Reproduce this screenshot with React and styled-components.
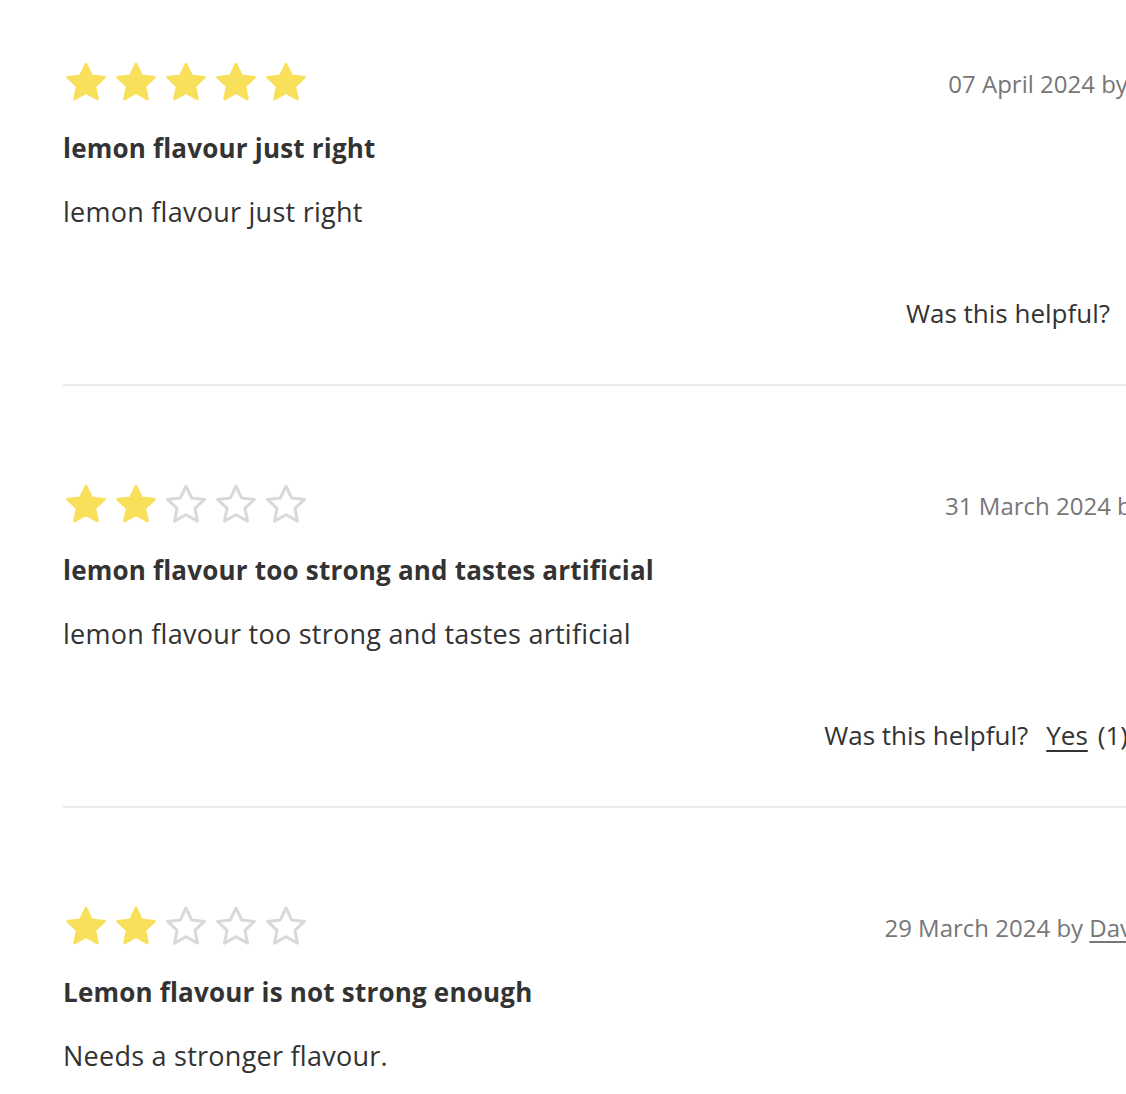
import React from 'react';
import styled, { createGlobalStyle } from 'styled-components'

const GlobalStyle = createGlobalStyle`
    html, body {
        margin: 0;
        padding: 0;
        background: #fff;
        overflow: hidden;
    }
    body {
        font-family: "Open Sans", Lato, sans-serif;
        color: #333;
    }
`

const Page = styled.div`
    padding: 60px 0 0 63px;
    width: 1065px;
`

const Review = styled.article`
    border-bottom: 2px solid #ebebeb;
    margin-bottom: 96px;
    padding-bottom: 53px;
`

const Header = styled.div`
    display: flex;
    align-items: center;
    justify-content: space-between;
    margin-right: -80px;
    height: 46px;
`

const Stars = styled.div`
    display: flex;
    gap: 2px;
    margin-left: -1px;
`

const DateLine = styled.div`
    font-size: 24px;
    color: #777;
    white-space: nowrap;
`

const Author = styled.a`
    color: #777;
    text-decoration: underline;
    text-underline-offset: 4px;
`

const Title = styled.h3`
    margin: 24px 0 0;
    font-size: 26px;
    letter-spacing: 0.2px;
    line-height: 36px;
    font-weight: 700;
    color: #333;
`

const Body = styled.p`
    margin: 28px 0 0;
    font-size: 27px;
    letter-spacing: 0.25px;
    line-height: 36px;
    color: #333;
`

const Helpful = styled.div`
    margin-top: 65px;
    display: flex;
    justify-content: flex-end;
    align-items: baseline;
    font-size: 26px;
    line-height: 36px;
    color: #333;
    white-space: nowrap;
`

const HelpLabel = styled.span`
    margin-right: 18px;
`

const Vote = styled.a`
    color: #333;
    text-decoration: underline;
    text-underline-offset: 5px;
    margin-right: 10px;
`

const Star = ({ filled }) => (
    <svg width="48" height="48" viewBox="0 0 24 24">
        <path
            d="M12 2.5l2.8 5.95 6.45.75-4.8 4.45 1.3 6.4L12 16.85 6.25 20.05l1.3-6.4L2.75 9.2l6.45-.75z"
            fill={filled ? '#f9e05b' : 'none'}
            stroke={filled ? '#f9e05b' : '#d9d9d9'}
            strokeWidth={filled ? 1.3 : 1.5}
            strokeLinejoin="round"
        />
    </svg>
)

const reviews = [
    { rating: 5, date: '07 April 2024', author: 'Rachel', title: 'lemon flavour just right', body: 'lemon flavour just right', votes: null },
    { rating: 2, date: '31 March 2024', author: 'Anna', title: 'lemon flavour too strong and tastes artificial', body: 'lemon flavour too strong and tastes artificial', votes: 1 },
    { rating: 2, date: '29 March 2024', author: 'Dave Scott', title: 'Lemon flavour is not strong enough', body: 'Needs a stronger flavour.', votes: null },
]

const App = () => {
    return (
        <Page>
            <GlobalStyle />
            {reviews.map((r, i) => (
                <Review key={i}>
                    <Header>
                        <Stars>
                            {[1, 2, 3, 4, 5].map(n => <Star key={n} filled={n <= r.rating} />)}
                        </Stars>
                        <DateLine>{r.date} by <Author href="#">{r.author}</Author></DateLine>
                    </Header>
                    <Title>{r.title}</Title>
                    <Body>{r.body}</Body>
                    <Helpful>
                        <HelpLabel>Was this helpful?</HelpLabel>
                        {r.votes !== null && <><Vote href="#">Yes</Vote><span>({r.votes})</span></>}
                    </Helpful>
                </Review>
            ))}
        </Page>
    )
}

export default App
